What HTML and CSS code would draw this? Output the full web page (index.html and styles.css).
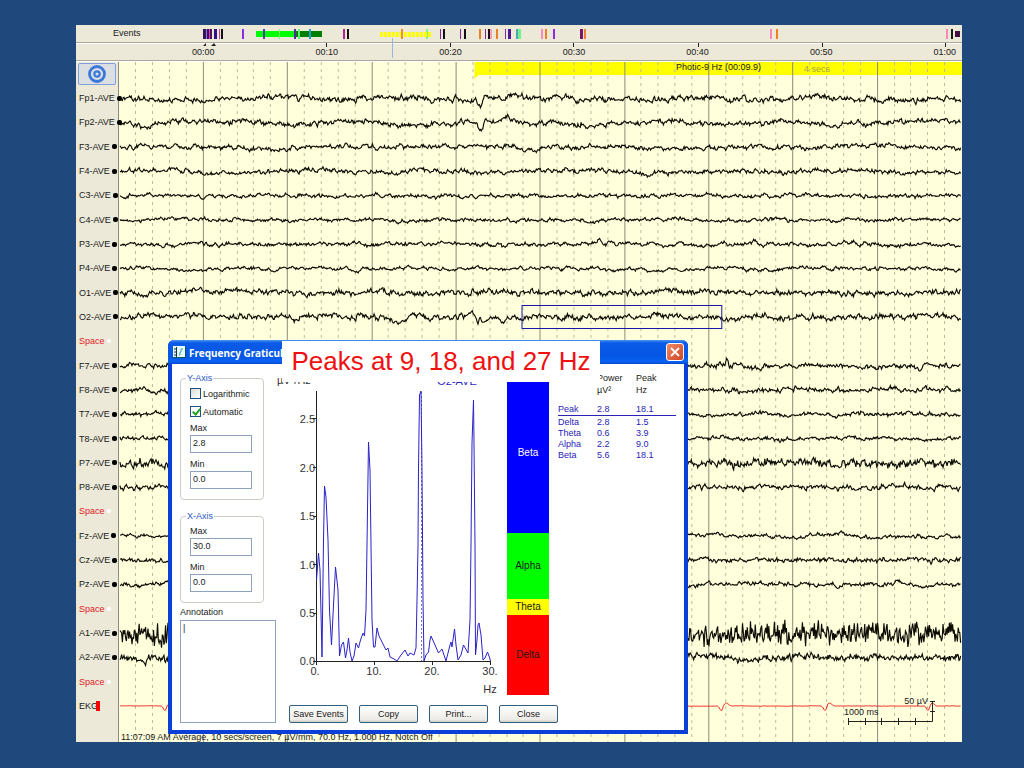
FILE: index.html
```
<!DOCTYPE html>
<html lang="en">
<head>
<meta charset="utf-8">
<title>EEG Review</title>
<link rel="stylesheet" href="styles.css">
</head>
<body>
<main class="app">
  <header class="timeline">
    <svg class="event-marks" viewBox="76 25 886 37" preserveAspectRatio="none" aria-hidden="true">
      <path d="M76 42.500H962M76 60.500H962" stroke="#aca899"/>
      <path d="M76 43.500H962M76 61.500H962" stroke="#fff"/>
      <g id="marks"></g>
      <path d="M326.500 43v4M450.500 43v4M573.500 43v4M698.500 43v4M822.500 43v4M945.500 43v4" stroke="#222"/>
      <path d="M203 46l3-3v3h2M211 46l3-3 2 3z" fill="#222"/>
      <path d="M392.500 38v20" stroke="#9db4dc"/>
    </svg>
    <div class="events-row"><span>Events</span></div>
    <div class="time-row"><span>00:00</span><span>00:10</span><span>00:20</span><span>00:30</span><span>00:40</span><span>00:50</span><span>01:00</span></div>
  </header>
  <div class="review">
    <aside class="channels">
      <button class="target" type="button" aria-label="Select channels">
        <svg width="20" height="20" viewBox="0 0 20 20" fill="none" stroke="#3a78dc"><circle cx="10" cy="10" r="7.500" stroke-width="2.800"/><circle cx="10" cy="10" r="2.700" stroke-width="2.200"/></svg>
      </button>
      <ul class="channel-list" id="channels"></ul>
    </aside>
    <section class="traces">
      <svg class="trace-svg" viewBox="118 62 844 680" preserveAspectRatio="none" aria-label="EEG traces">
        <path d="M474 62H962V75H478L474 79z" fill="#ffff00"/>
        <g id="grid"></g>
        <g id="waves"></g>
        <rect x="521.500" y="305.500" width="200" height="23" fill="none" stroke="#1818a8"/>
      </svg>
      <div class="photic"><span>Photic-9 Hz (00:09.9)</span><span class="secs">4 secs</span></div>
      <div class="scale">
        <span class="scale-uv">50 µV</span>
        <span class="scale-ms">1000 ms</span>
        <svg width="88" height="26" viewBox="0 0 88 26" fill="none" stroke="#222"><path d="M.500 22.500H84.500V2M.500 19v7M17.500 19v7M33.500 19v7M50.500 19v7M67.500 19v7M82 2.500h5M82 12.500h5"/></svg>
      </div>
      <p class="status">11:07:09 AM Average, 10 secs/screen, 7 µV/mm, 70.0 Hz, 1.000 Hz, Notch Off</p>
    </section>
  </div>

  <section class="dialog" role="dialog" aria-labelledby="dlg-title">
    <div class="titlebar">
      <svg width="13" height="12" viewBox="0 0 13 12"><path d="M0 0h13v12H0z" fill="#e8fbfb"/><path d="M3.500 1v10M1 3h2M1 6h2M1 9h2" stroke="#134" fill="none"/><path d="M6 9h1V6h1V3h2" stroke="#39a0a8" fill="none"/><path d="M12.500 0v12M0 11.500h13" stroke="#056"/></svg>
      <h1 id="dlg-title">Frequency Graticule</h1>
      <button class="close-x" type="button" aria-label="Close window"><svg width="10" height="10" viewBox="0 0 10 10"><path d="M1 1l8 8M9 1l-8 8" stroke="#fff" stroke-width="1.800"/></svg></button>
    </div>
    <form class="dialog-body">
      <div class="settings">
        <fieldset>
          <legend>Y-Axis</legend>
          <label class="check"><input type="checkbox">Logarithmic</label>
          <label class="check"><input type="checkbox" checked>Automatic</label>
          <label class="field">Max<input type="text" value="2.8"></label>
          <label class="field">Min<input type="text" value="0.0"></label>
        </fieldset>
        <fieldset>
          <legend>X-Axis</legend>
          <label class="field">Max<input type="text" value="30.0"></label>
          <label class="field">Min<input type="text" value="0.0"></label>
        </fieldset>
        <label class="annotation">Annotation<textarea>|</textarea></label>
      </div>
      <div class="results">
        <div class="plots">
          <svg class="spectrum" viewBox="276 366 224 332" aria-label="Power spectrum">
            <g class="axis-text">
              <text x="277" y="384">µV²/Hz</text>
              <text x="457" y="385" text-anchor="middle" class="lead">O2-AVE</text>
              <g text-anchor="end"><text x="315" y="423">2.5</text><text x="315" y="472">2.0</text><text x="315" y="520">1.5</text><text x="315" y="569">1.0</text><text x="315" y="617">0.5</text><text x="315" y="665">0.0</text></g>
              <g text-anchor="middle"><text x="315" y="675">0.</text><text x="374" y="675">10.</text><text x="432" y="675">20.</text><text x="490" y="675">30.</text><text x="490" y="693">Hz</text></g>
            </g>
            <path d="M316.500 391V661.500H491M313 418.500h4M313 467.500h4M313 516.500h4M313 564.500h4M313 613.500h4M313 661.500h4M316.500 661v4M374.500 661v4M432.500 661v4M490.500 661v4" fill="none" stroke="#222"/>
            <path d="M421.500 392V661" stroke="#77b" stroke-dasharray="2 2"/>
            <path fill="none" stroke="#2a22c8" d="M316.500 580L318.500 553 320 570 322 657 323.500 540 324.500 486 326 497 328 540 329.500 610 331.500 645 333.500 605 335.500 567 338 590 339.500 656 341.500 645 343.500 642 345.500 658 347 650 348.500 638 350 652 352 661 354 656 356 643 358.500 648 360.500 640 363 633 364.500 636 366 610 367 545 368.500 442 370 470 371 545 372 620 373.500 647 375 647 377 628 379 636 382 642 386 650 388 648 390 657 394 659 397 661 399 658 401 655 405 650 408 656 410 653 414 655 416 648 417 600 418 545 418.500 470 419.500 395 421 391 422 470 423 600 424 661 426 655 428.500 652 430 640 431 636 435 645 438.500 653 442 649 446 661 450 645 451 642 452 647 454.500 629 456 645 458 660 461 655 463.500 645 468 653 470 620 471 545 472 443 473.500 400 474 443 475 545 475.500 655 477 640 478 625 479 623 481 635 483 660 485 658 487.500 652 489 656 490.500 661"/>
          </svg>
          <div class="bands"><div class="beta">Beta</div><div class="alpha">Alpha</div><div class="theta">Theta</div><div class="delta">Delta</div></div>
          <table class="powers">
            <thead><tr><th></th><th>Power<br>µV²</th><th>Peak<br>Hz</th></tr></thead>
            <tbody>
              <tr class="peak"><td>Peak</td><td>2.8</td><td>18.1</td></tr>
              <tr><td>Delta</td><td>2.8</td><td>1.5</td></tr>
              <tr><td>Theta</td><td>0.6</td><td>3.9</td></tr>
              <tr><td>Alpha</td><td>2.2</td><td>9.0</td></tr>
              <tr><td>Beta</td><td>5.6</td><td>18.1</td></tr>
            </tbody>
          </table>
        </div>
        <div class="actions"><button type="button">Save Events</button><button type="button">Copy</button><button type="button">Print...</button><button type="button">Close</button></div>
      </div>
    </form>
    <p class="caption">Peaks at 9, 18, and 27 Hz</p>
  </section>
</main>
<script src="traces.js"></script>
</body>
</html>
```

FILE: styles.css
```
* { box-sizing: border-box; }
body {
  margin: 0;
  min-height: 100vh;
  display: flex;
  padding: 25px 62px 26px 76px;
  background: #1f487c;
  font: 9px/10px "Liberation Sans", Arial, sans-serif;
  color: #1a1a1a;
}
button, input, textarea { font: inherit; color: inherit; margin: 0; }
p, h1, ul { margin: 0; padding: 0; }

.app { position: relative; flex: 1; display: flex; flex-direction: column; background: #ece9d8; }

.timeline { position: relative; height: 37px; }
.event-marks { position: absolute; inset: 0; width: 100%; height: 100%; }
.events-row { height: 18px; padding: 3px 37px; }
.time-row { display: flex; justify-content: space-between; padding: 4px 6px 0 116px; }
.events-row span, .time-row span { position: relative; }

.review { flex: 1; display: flex; }
.channels { width: 42px; display: flex; flex-direction: column; padding: 1px 0 24px; }
.target {
  height: 22px; width: 38px; margin-left: 2px; padding: 0;
  display: flex; align-items: center; justify-content: center;
  background: #dcdfe2; border: 1px solid #7f9fe0; border-radius: 2px;
}
.channel-list { flex: 1; display: flex; flex-direction: column; list-style: none; padding: 1px 0 0 3px; position: relative; z-index: 1; }
.channel-list li { flex: 1; display: flex; align-items: center; gap: 2px; white-space: nowrap; }
.channel-list li::after { content: ""; flex: none; width: 5px; height: 5px; border-radius: 2px; background: #000; }
.channel-list .space { color: #e02028; }
.channel-list .space::after { width: 4px; height: 4px; background: #fff; }
.channel-list .ekg { gap: 0; }
.channel-list .ekg::after { width: 4px; height: 10px; margin-left: -2px; border-radius: 0; background: #f00; }

.traces { position: relative; flex: 1; background: #ffffdc; border-left: 1px solid #8c8c80; overflow: hidden; }
.trace-svg { position: absolute; inset: 0; width: 100%; height: 100%; }
.photic { position: relative; display: flex; justify-content: flex-end; gap: 43px; padding: 0 132px 0 0; }
.secs { color: #a9a540; padding-top: 2px; }
.scale { position: absolute; right: 26px; bottom: 17px; width: 88px; }
.scale svg { display: block; }
.scale-uv, .scale-ms { position: absolute; }
.scale-uv { right: 8px; top: -3px; }
.scale-ms { left: -4px; top: 8px; }
.status { position: absolute; left: 2px; bottom: 0; white-space: nowrap; }

.dialog {
  position: absolute; left: 92px; top: 315px; width: 520px;
  border: solid #0a3fd8; border-width: 0 4px 4px;
  border-radius: 6px 6px 0 0; background: #fff;
}
.titlebar {
  height: 24px; margin: 0 -4px; padding: 0 4px 0 5px;
  display: flex; align-items: center; gap: 3px;
  border-radius: 6px 6px 0 0;
  background: linear-gradient(#4c94f0, #0b5be8 12%, #0556e4 70%, #0a63f4 90%, #0446c8);
}
.titlebar h1 { flex: 1; font: bold 10px/16px "Noto Sans", sans-serif; color: #fff; padding-top: 2px; }
.close-x {
  width: 18px; height: 18px; padding: 0; display: flex; align-items: center; justify-content: center;
  border: 1px solid #fff; border-radius: 3px; background: linear-gradient(135deg, #ee8a68, #d04424);
}
.dialog-body { display: flex; padding: 2px 8px 7px; }
.settings { width: 96px; padding-top: 7px; }
fieldset {
  width: 84px; margin: 0 0 11px; padding: 5px 11px 10px 9px;
  border: 1px solid #ccccc4; border-radius: 4px;
  display: flex; flex-direction: column;
}
fieldset + fieldset { margin-bottom: 4px; }
legend { padding: 0 1px; margin-left: -4px; color: #2b57c4; }
.check { display: flex; align-items: center; gap: 2px; height: 11px; margin-bottom: 7px; }
.check input {
  appearance: none; flex: none; width: 11px; height: 11px;
  border: 1px solid #1c5180; background: linear-gradient(135deg, #dcdcd7, #fff);
}
.check input:checked { background: #fff; position: relative; }
.check input:checked::after {
  content: ""; position: absolute; left: 3px; top: 0; width: 3px; height: 6px;
  border: solid #21a121; border-width: 0 2px 2px 0; transform: rotate(40deg);
}
.check + .field { margin-top: -1px; }
.field { display: flex; flex-direction: column; gap: 2px; }
.field + .field { margin-top: 6px; }
.field input { width: 100%; height: 18px; padding: 0 2px 2px; border: 1px solid #8fa3c0; background: #fff; }
.annotation { display: flex; flex-direction: column; gap: 3px; }
.annotation textarea { height: 103px; width: 100%; padding: 2px; border: 1px solid #8fa3c0; resize: none; }

.results { flex: 1; display: flex; flex-direction: column; }
.plots { display: flex; height: 332px; }
.spectrum { width: 224px; height: 332px; flex: none; }
.axis-text { font-size: 11px; fill: #333; }
.axis-text .lead { fill: #2a22c8; }
.bands { width: 42px; margin: 7px 9px 3px 7px; display: flex; flex-direction: column; font-size: 10px; text-align: center; }
.bands div { display: flex; align-items: center; justify-content: center; }
.beta { flex: 160; background: #0000ff; color: #fff; }
.alpha { flex: 66; background: #00ff00; }
.theta { flex: 16; background: #ffff00; }
.delta { flex: 80; background: #ff0000; }
.powers { border-collapse: collapse; align-self: flex-start; width: 118px; margin-top: 6px; color: #2a22b8; }
.powers th, .powers td { padding: 0; text-align: left; font-weight: normal; line-height: 11px; }
.powers th { color: #1a1a1a; line-height: 12px; padding-bottom: 7px; }
.powers tr > :nth-child(1), .powers tr > :nth-child(2) { width: 39px; }
.powers .peak td { border-bottom: 1px solid #2a22b8; line-height: 12px; }
.powers .peak + tr td { padding-top: 1px; }
.actions { display: flex; gap: 11px; padding: 7px 0 0 13px; }
.actions button {
  width: 59px; height: 18px; padding: 0; white-space: nowrap;
  border: 1px solid #335f80; border-radius: 2px; background: linear-gradient(#fff, #ecebe6 85%, #d0ccc0);
}
.caption {
  position: absolute; left: 110px; top: 1px; width: 318px; height: 41px;
  background: #fff; color: #f01010; text-align: center; font-size: 26px; line-height: 41px; white-space: nowrap;
}
```

FILE: traces.js
```
const NS = "http://www.w3.org/2000/svg";
function add(parent, tag, attrs) {
  const el = document.createElementNS(NS, tag);
  for (const k in attrs) el.setAttribute(k, attrs[k]);
  parent.appendChild(el);
}

// Event markers: x, width, colour, optional top and height
const marks = document.getElementById("marks");
[
  [256, 39, "#00ff00", 31, 6], [295, 27, "#008000", 31, 6],
  [203, 8, "#38105c"], [206, 1, "#8080e0"], [209, 1, "#e040d0"], [211, 1, "#701048"],
  [214, 3, "#2c1488"], [219, 1, "#c83c98"], [221, 2, "#181018"], [242, 2, "#8c28e8"],
  [263, 2, "#5040a0"], [279, 1, "#70ff70"], [294, 2, "#5828a0"], [298, 2, "#50f870"], [309, 2, "#20a0c8"],
  [343, 2, "#b02888"], [347, 2, "#181018"],
  [426, 2, "#80f080"], [440, 1, "#7c2c98"], [443, 2, "#181018"],
  [460, 1, "#7c2c98"], [464, 2, "#181018"], [479, 2, "#e88028"], [485, 1, "#7c2c98"],
  [488, 2, "#181018"], [490, 2, "#f8a0b8"], [496, 2, "#e88028"], [505, 1, "#7c2c98"],
  [508, 3, "#4c1c98"], [516, 2, "#50a8b0"], [518, 3, "#70f090"], [541, 2, "#f888b8"],
  [545, 2, "#e88028"], [553, 2, "#8c28e8"], [580, 3, "#781868"], [584, 2, "#f08030"],
  [770, 2, "#f888b8"], [776, 2, "#f08020"], [946, 2, "#f888b8"], [951, 2, "#102010"],
  [955, 5, "#401040", 31, 6]
].forEach(([x, w, c, y = 29, h = 10]) => add(marks, "rect", { x, y, width: w, height: h, fill: c }));
for (let x = 380; x < 431; x += 4) add(marks, "rect", { x, y: 32, width: 3, height: 5, fill: "#ffff00" });
add(marks, "rect", { x: 401, y: 29, width: 2, height: 10, fill: "#f09020" });

// One solid line per second, dashed lines every 200 ms
const grid = document.getElementById("grid");
for (let i = 1; i < 50; i++) {
  const x = Math.floor(118 + i * 16.87) + 0.5;
  add(grid, "path", i % 5
    ? { d: `M${x} 62V742`, stroke: "#bcbc9c", "stroke-dasharray": "3 4" }
    : { d: `M${x} 62V742`, stroke: "#8c8c78" });
}

// label, amplitude, slow drift, smoothness
const channels = [
  ["Fp1-AVE", 2.4, 2.6, 0.5], ["Fp2-AVE", 2.3, 2.6, 0.5], ["F3-AVE", 2, 1.4, 0.55], ["F4-AVE", 2, 1.6, 0.5],
  ["C3-AVE", 1.6, 0.8, 0.55], ["C4-AVE", 1.5, 0.7, 0.5], ["P3-AVE", 1.8, 0.9, 0.6], ["P4-AVE", 1.6, 0.9, 0.65],
  ["O1-AVE", 2.4, 1.2, 0.55], ["O2-AVE", 2.6, 1.2, 0.55], ["Space"],
  ["F7-AVE", 2.2, 1.6, 0.55], ["F8-AVE", 2, 1.2, 0.5], ["T7-AVE", 1.8, 0.7, 0.5], ["T8-AVE", 1.7, 0.7, 0.5],
  ["P7-AVE", 3.2, 0.8, 0.2], ["P8-AVE", 2.1, 0.8, 0.4], ["Space"],
  ["Fz-AVE", 1.7, 1.5, 0.65], ["Cz-AVE", 1.8, 0.6, 0.35], ["Pz-AVE", 2.1, 0.9, 0.7], ["Space"],
  ["A1-AVE", 8.5, 0.6, 0.05], ["A2-AVE", 2.7, 1.2, 0.3], ["Space"], ["EKG", 0.2, 0.2, 0.5]
];
// Isolated deflections: x, height, width
const spikes = {
  "Fp1-AVE": [[480, 9, 3], [512, -3, 18], [530, 3, 12]],
  "Fp2-AVE": [[480, 10, 3], [503, -4, 18], [148, 4, 12]],
  "F3-AVE": [[511, -3, 10], [530, 3, 10]], "F4-AVE": [[170, -3, 5], [646, 4, 8]],
  "P3-AVE": [[599, -5, 2], [200, -3, 3]], "O1-AVE": [[199, -4, 3]],
  "O2-AVE": [[471, -6, 3], [477, 4, 3], [484, 6, 3], [197, -3, 3]],
  "F7-AVE": [[727, -8, 1.5]], "P7-AVE": [[758, -5, 2]],
  "EKG": [[164, 5, 2], [168, -2, 3], [721, 5, 2], [726, -3, 3], [825, 5, 2], [829, -3, 3], [928, 5, 2], [932, -3, 3]]
};
const list = document.getElementById("channels");
const waves = document.getElementById("waves");
channels.forEach(([name, amp, drift, smooth], n) => {
  const li = document.createElement("li");
  li.textContent = name;
  if (name === "Space") li.className = "space";
  if (name === "EKG") li.className = "ekg";
  list.appendChild(li);
  if (!amp) return;
  let seed = 7919 * (n + 3);
  const rnd = () => (seed = (seed * 16807) % 2147483647) / 2147483647;
  const base = 98.5 + n * 24.3;
  let v = 0, slow = 0, d = "";
  for (let x = 119; x < 961; x += 0.8) {
    v = v * smooth + (rnd() + rnd() - 1) * amp * 1.6 * (1 - smooth * 0.5);
    slow = slow * 0.87 + (rnd() - 0.5) * Math.min(amp, 3) * 0.75;
    let y = base + v + slow
      + drift * 0.6 * Math.sin(x / 23 + n * 1.7 + Math.sin(x / 61))
      + drift * 0.2 * Math.sin(x / 7.3 + n * 2 + 2 * Math.sin(x / 37));
    for (const [sx, h, w] of spikes[name] || []) y += h * Math.exp(-(((x - sx) / w) ** 2));
    d += (d ? "L" : "M") + x.toFixed(1) + " " + y.toFixed(1);
  }
  const ekg = name === "EKG";
  add(waves, "path", { d, fill: "none", stroke: ekg ? "#f02020" : "#0c0c04", "stroke-width": ekg ? 1 : 1.15 });
});
```
